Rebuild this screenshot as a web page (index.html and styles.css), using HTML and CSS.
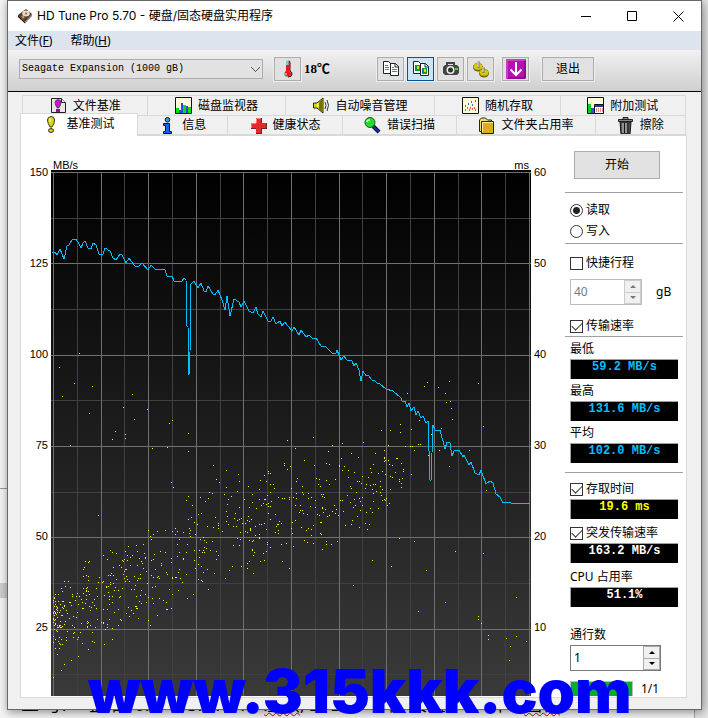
FILE: index.html
```html
<!DOCTYPE html>
<html lang="zh-CN">
<head>
<meta charset="utf-8">
<title>HD Tune Pro 5.70</title>
<link rel="stylesheet" href="styles.css">
</head>
<body>
<main class="window">
  <header class="titlebar">
    <svg class="app-icon" viewBox="0 0 16 16"><path d="M1 7 9 1l6 5-7 8z" fill="#493a30"/><path d="m1 7 7 7v1.500L1 9z" fill="#17120f"/><path d="m8 14 7-8v2l-7 7.500z" fill="#8a7460"/><ellipse cx="9" cy="5.500" rx="3.800" ry="3" fill="#e6d9cb"/><circle cx="9" cy="5.500" r="1" fill="#856750"/><path d="m4 8 2-1 2 3-2 1z" fill="#d98d35"/></svg>
    <h1>HD Tune Pro 5.70 - 硬盘/固态硬盘实用程序</h1>
    <div class="caption">
      <button aria-label="最小化"><svg viewBox="0 0 11 11"><path d="M0 5.500h10"/></svg></button>
      <button aria-label="最大化"><svg viewBox="0 0 11 11"><path d="M.5.5h9v9h-9z"/></svg></button>
      <button aria-label="关闭"><svg viewBox="0 0 11 11"><path d="m.5.5 10 10m0-10-10 10"/></svg></button>
    </div>
  </header>
  <nav class="menubar"><a href="#">文件(<u>F</u>)</a><a href="#">帮助(<u>H</u>)</a></nav>
  <section class="toolbar">
    <select class="drive" aria-label="硬盘"><option>Seagate Expansion (1000 gB)</option></select>
    <button class="tool" aria-label="温度"><svg viewBox="0 0 18 18"><path d="M7 11V2.500q0-2 2-2t2 2V11q2 1 2 3.300Q13 17 9.500 17 5 17 5 14q0-2 2-3" fill="#8e8e8e"/><path d="M7 2.500Q7 1 9 1v11H7z" fill="#4ce0ee"/><path d="M7 5h3v6q2 1 2 3 0 2-3 2t-3-2q0-2 1-3z" fill="#f01818"/><path d="M10 1q1 0 1 2v8q2 1 2 3 0 3-4 3" fill="none" stroke="#400" stroke-width="1"/><path d="M7 13v2" stroke="#fff"/></svg></button>
    <output class="temp">18℃</output>
    <button class="tool" aria-label="复制文本"><svg viewBox="0 0 18 18"><g fill="#fff" stroke="#222"><path d="M1.500 1.500h5l3 3v9h-8z"/><path d="M8.500 3.500h5l3 3v9h-8z"/><path d="M13 3.500v3.500h3.500" fill="none"/></g><path d="M3 5.500h3M3 7.500h4M3 9.500h4M10 7.500h2M10 9.500h5M10 11.500h5" stroke="#188cf0"/></svg></button>
    <button class="tool selected" aria-label="复制图像"><svg viewBox="0 0 18 18"><g fill="#fff" stroke="#222"><path d="M1.500 1.500h5l3 3v9h-8z"/><path d="M8.500 3.500h5l3 3v9h-8z"/><path d="M13 3.500v3.500h3.500" fill="none"/></g><path d="M3 5h5v6H3zM10 8h5v6h-5z" fill="#00a02c"/><path d="M5 6h2v3H5zM12 9h2v3h-2z" fill="#f3d21c"/><path d="M3 7h1v3H3zM10 10h1v3h-1z" fill="#2855e8"/></svg></button>
    <button class="tool" aria-label="截图"><svg viewBox="0 0 18 18"><path d="M5 5V3h7v2" fill="none" stroke="#444" stroke-width="2"/><path d="M3 5h12l2 2v6l-2 2H3l-2-2V7z" fill="#444"/><circle cx="8.500" cy="10" r="4" fill="#eee"/><circle cx="8.500" cy="10" r="2.500" fill="#333"/><path d="M13 8h3v2h-3z" fill="#20e030"/></svg></button>
    <button class="tool" aria-label="选项"><svg viewBox="0 0 18 18"><ellipse cx="6" cy="7.500" rx="5" ry="4" fill="#6b6200"/><ellipse cx="12" cy="13.500" rx="5" ry="4" fill="#6b6200"/><g fill="#d8c800" stroke="#9a8d00"><ellipse cx="6" cy="6.500" rx="4.500" ry="3.500" stroke-dasharray="2 1"/><ellipse cx="12" cy="12.500" rx="4.500" ry="3.500" stroke-dasharray="2 1"/></g><path d="M6.500 1v7M11.500 7v6" stroke="#777" stroke-width="2"/><path d="M6 1v6M11 7v5" stroke="#eee"/></svg></button>
    <button class="tool save" aria-label="保存"><svg viewBox="0 0 20 20"><rect x="0" y="0" width="20" height="20" rx="1" fill="#b410b4"/><path d="M1 19V1h18" stroke="#dc6adc" fill="none"/><path d="M19 2v17H2" stroke="#730073" fill="none"/><path d="M10 3v12M4.500 10.500l5.500 5.500 5.500-5.500" fill="none" stroke="#fff" stroke-width="2"/></svg></button>
    <button class="exit">退出</button>
  </section>
  <section class="content">
    <div class="tabs">
      <button class="tab"><svg viewBox="0 0 17 17"><path d="M1.500 1.500h10l4 4v10h-14z" fill="#e8e8e8" stroke="#222"/><path d="M11.500 1.500v4h4" fill="#fff" stroke="#222"/><path d="M8 2.500q3 0 3 3T8.800 11H7.200Q5 8 5 5.500t3-3" fill="#c814d0" stroke="#222" stroke-width=".6"/><path d="M6 12h4v3H6z" fill="#a000b0"/></svg>文件基准</button>
      <button class="tab"><svg viewBox="0 0 17 17"><path d="M.5.5h16v16H.5z" fill="#fffde0" stroke="#111"/><path d="M1 11h3v5H1zM8 8h3v8H8zM13 10h3v6h-3z" fill="#00e000"/><path d="M4 13h2v3H4zM6 6h2v10H6zM11 9h2v7h-2z" fill="#3048d8"/></svg>磁盘监视器</button>
      <button class="tab"><svg viewBox="0 0 17 17"><path d="M.5 6v5H4l6 5V1L4 6z" fill="#d8d800" stroke="#222"/><path d="M6 6v6l3 3V2z" fill="#777000"/><path d="M5 6v4" stroke="#fff"/><path d="M12 5q2 3 0 7M14 3q3 5 0 11" fill="none" stroke="#333"/></svg>自动噪音管理</button>
      <button class="tab"><svg viewBox="0 0 17 17"><path d="M.5.5h16v16H.5z" fill="#fffbd8" stroke="#111"/><path d="M3 13h1M5 11h1M7 13h1M8 11h1M10 12h1M12 11h1M13 13h1" stroke="#e82020" stroke-width="1.500"/><path d="M3 9h1M6 7h1M9 5h1M10 8h1M13 4h1" stroke="#2030e0" stroke-width="1.500"/></svg>随机存取</button>
      <button class="tab"><svg viewBox="0 0 17 17"><path d="M.5.5h16v16H.5z" fill="#fffbd8" stroke="#111"/><path d="M1 7h3v9H1z" fill="#00d020"/><path d="M4 11h3v5H4z" fill="#3050e0"/><path d="M7.500 7.500h9v9h-9z" fill="#fff" stroke="#111"/><path d="M8 8h8v2H8z" fill="#283890"/><path d="M9 12h7M9 14h7" stroke="#d02020" stroke-dasharray="1 1"/></svg>附加测试</button>
    </div>
    <div class="tabs front">
      <button class="tab active"><svg viewBox="0 0 17 17"><path d="M8 .5q3.500 0 3.500 3.500T9 11H7Q4.500 7 4.500 4T8 .5" fill="#d8d800" stroke="#333"/><path d="M7 2v4" stroke="#fff"/><ellipse cx="8" cy="14.500" rx="2.500" ry="2" fill="#d0d000" stroke="#333"/></svg>基准测试</button>
      <button class="tab"><svg viewBox="0 0 17 17"><circle cx="8.500" cy="2.800" r="2.300" fill="#18a8f0" stroke="#111"/><path d="M4.500 6.500h6v8h2v2h-8v-2h2v-6h-2z" fill="#1464f0" stroke="#111"/></svg>信息</button>
      <button class="tab"><svg viewBox="0 0 17 17"><path d="M6 1h6v5h5v6h-5v5H6v-5H1V6h5z" fill="#7d1d20"/><path d="M6 1h5v5h5v5h-5v5H6v-5H1V6h5z" fill="#e42a2e"/><path d="M6.500 6V1.500H11M1.500 11V6.500H6" fill="none" stroke="#f47b76"/></svg>健康状态</button>
      <button class="tab"><svg viewBox="0 0 17 17"><path d="m9 9 6 6" stroke="#111" stroke-width="4"/><path d="m9 9 6 6" stroke="#1624d0" stroke-width="2"/><circle cx="6" cy="5.500" r="5" fill="#24dc28" stroke="#116018"/><path d="M3 5q0-2 3-2" fill="none" stroke="#d6ffd6" stroke-width="1.500"/></svg>错误扫描</button>
      <button class="tab"><svg viewBox="0 0 17 17"><path d="M1.500 14.500V3l2-2h4l2 2h4v12z" fill="#f1e36a" stroke="#222"/><path d="M3.500 4.500h12v12h-12z" fill="#d8af18" stroke="#222"/><path d="M4.500 15V5.500H15" fill="none" stroke="#fff39a"/></svg>文件夹占用率</button>
      <button class="tab"><svg viewBox="0 0 17 17"><path d="M3 5h11l-1 12H4z" fill="#555" stroke="#111"/><path d="M6 6v10M9 6v10" stroke="#d0d0d0"/><path d="M7.500 6v10M11 6v10" stroke="#181818"/><path d="M1.500 2.500h14v2h-14zM6 2V.5h5V2" fill="#888" stroke="#222"/></svg>擦除</button>
    </div>
    <div class="panel">
      <div class="axis left"><span>150</span><span>125</span><span>100</span><span>75</span><span>50</span><span>25</span></div>
      <figure class="chart">
        <figcaption><span>MB/s</span><span>ms</span></figcaption>
        <svg id="plot" viewBox="51 170 480 526" preserveAspectRatio="none" shape-rendering="crispEdges">
          <defs><linearGradient id="shade" x1="0" y1="0" x2="0" y2="1"><stop offset="0" stop-color="#000"/><stop offset="1" stop-color="#3a3a3a"/></linearGradient></defs>
          <rect x="51" y="170" width="480" height="526" fill="url(#shade)"/>
          <path id="minor" class="minor"/>
          <path id="major" class="major"/>
          <path id="access" fill="#ff0"/>
          <polyline class="transfer" points="52,252 55,252 57,255 60,249 64,259 67,246 69,245 72,240 76,239 79,244 81,248 83,243 85,241 88,248 91,249 93,243 96,245 99,254 103,254 105,248 110,251 113,258 116,260 120,254 122,255 126,263 129,258 135,266 139,266 142,263 148,270 151,265 156,270 160,269 165,270 167,276 172,276 174,281 182,281 184,278 186,280 187,326 188,327 189,375 190,352 191,284 194,281 198,288 201,283 204,291 206,292 208,286 213,294 215,295 218,290 222,300 225,310 227,296 230,316 234,299 239,302 241,307 244,301 249,311 253,313 256,307 258,314 261,317 263,311 268,321 271,321 273,317 276,324 280,321 282,326 285,322 288,326 292,331 294,327 299,335 301,330 306,337 309,335 313,339 316,338 321,346 325,346 332,353 336,353 337,350 341,360 344,356 347,360 352,361 354,366 356,363 359,370 361,381 363,371 366,376 368,375 372,380 374,380 377,383 380,384 386,389 393,391 401,398 402,401 405,401 407,407 409,403 411,411 414,407 416,415 418,411 421,418 423,416 426,423 428,421 430,480 431,481 433,425 435,430 438,431 440,430 445,449 447,442 450,443 452,456 454,451 459,450 463,457 464,455 469,465 471,462 475,473 479,475 481,470 486,484 490,481 493,483 496,494 500,497 503,503 508,502 511,503 530,503"/>
        </svg>
      </figure>
      <div class="axis right"><span>60</span><span>50</span><span>40</span><span>30</span><span>20</span><span>10</span></div>
      <form class="side">
        <button type="button" class="start">开始</button>
        <div class="group modes">
          <label class="check"><input type="radio" name="mode" checked>读取</label>
          <label class="check"><input type="radio" name="mode">写入</label>
        </div>
        <div class="group options">
          <label class="check"><input type="checkbox">快捷行程</label>
          <div class="row"><span class="spin disabled"><input type="text" value="40" disabled aria-label="行程容量"><span class="arrows"><button type="button" disabled aria-label="增加"></button><button type="button" disabled aria-label="减少"></button></span></span><span>gB</span></div>
          <label class="check"><input type="checkbox" checked>传输速率</label>
        </div>
        <div class="group rates">
          <div class="stat"><label for="min">最低</label><output id="min">59.2 MB/s</output></div>
          <div class="stat"><label for="max">最高</label><output id="max">131.6 MB/s</output></div>
          <div class="stat"><label for="avg">平均</label><output id="avg">102.0 MB/s</output></div>
        </div>
        <div class="group others">
          <div class="stat"><label class="check"><input type="checkbox" checked>存取时间</label><output class="yellow">19.6 ms</output></div>
          <div class="stat"><label class="check"><input type="checkbox" checked>突发传输速率</label><output class="white">163.2 MB/s</output></div>
          <div class="stat"><label for="cpu">CPU 占用率</label><output id="cpu" class="white">51.1%</output></div>
        </div>
        <div class="passes">
          <label for="pass">通行数</label>
          <span class="spin wide"><input id="pass" type="text" value="1"><span class="arrows"><button type="button" aria-label="增加"></button><button type="button" aria-label="减少"></button></span></span>
          <div class="progress"><span class="bar"></span><span>1/1</span></div>
        </div>
      </form>
    </div>
  </section>
</main>
<p class="document-line">二 号: 一盘 的 0.0 一 3.2T 6TB <u>左频</u>, 2TB 了 个福 安盘 一个讲 0 <u>图标</u></p>
<div class="watermark">www.315kkk.com</div>
<script src="chart.js"></script>
</body>
</html>
```
FILE: styles.css
```css
* { box-sizing: border-box; }
body {
  position: relative;
  margin: 0;
  padding: 0 6px 0 7px;
  min-height: 100vh;
  overflow: hidden;
  font: 12px/16px "Noto Sans", "Noto Sans CJK SC", sans-serif;
  color: #000;
  background:
    linear-gradient(#999, #999) 0 488px / 8px 1px no-repeat,
    linear-gradient(#ccc, #ccc) 0 583px / 8px 15px no-repeat,
    linear-gradient(90deg, #f4f4f4 0 694px, #aaa 694px 695px, #e4e4e4 695px);
}
button, input, select, output { font: inherit; color: inherit; }
button { padding: 0; cursor: default; }
.window {
  position: relative;
  z-index: 1;
  border: 1px solid #686868;
  background: #f0f0f0;
  box-shadow: 1px 2px 9px rgba(0, 0, 0, .45);
}
.titlebar { display: flex; align-items: center; height: 30px; padding-left: 9px; background: #fff; }
.app-icon { width: 16px; height: 16px; }
h1 { margin: 0 auto 0 4px; font: 400 12px/16px Inter, "Noto Sans CJK SC", sans-serif; }
.caption { display: flex; }
.caption button { display: grid; place-items: center; width: 46px; height: 30px; border: 0; background: none; }
.caption svg { width: 11px; height: 11px; fill: none; stroke: #000; }
.menubar { display: flex; gap: 18px; align-items: center; height: 19px; padding-left: 7px; background: #dde4ed; }
.menubar a { color: #000; text-decoration: none; }
.toolbar {
  display: flex;
  align-items: center;
  height: 42px;
  padding: 0 11px 3px;
  border-bottom: 1px solid #000;
  background: linear-gradient(#f1f1f1, #cfcfcf);
}
.drive {
  appearance: none;
  width: 244px;
  height: 20px;
  padding: 0 2px;
  border: 1px solid #adadad;
  border-radius: 0;
  font: 10px/18px "Liberation Mono", monospace;
  background:
    linear-gradient(45deg, transparent 46%, #555 46% 58%, transparent 58%) 231px 7px / 5px 5px no-repeat,
    linear-gradient(-45deg, transparent 46%, #555 46% 58%, transparent 58%) 235px 7px / 5px 5px no-repeat,
    #e2e2e2;
}
.tool, .exit { border: 1px solid #adadad; background: #e1e1e1; box-shadow: 0 0 0 1px #eee; }
.tool { display: grid; place-items: center; width: 27px; height: 24px; margin-right: 3px; }
.tool svg { width: 18px; height: 18px; }
.tool.selected { border-color: #005499; background: #cce4f7; }
.drive + .tool { margin-left: 11px; }
.tool.save { margin: 0 13px 0 5px; }
.tool.save svg { width: 20px; height: 20px; }
.temp { width: 73px; font: bold 13px/16px "Liberation Serif", "Noto Sans CJK SC", serif; }
.exit { width: 52px; height: 24px; }
.content { padding: 3px 14px 11px 12px; }
.tabs { display: flex; height: 20px; margin: 0 1px 0 2px; }
.tab {
  display: flex;
  flex: auto;
  align-items: center;
  justify-content: center;
  gap: 6px;
  height: 21px;
  border: 1px solid #d9d9d9;
  border-left-width: 0;
  background: #f0f0f0;
}
.tab:first-child { border-left-width: 1px; }
.tab svg { width: 17px; height: 17px; }
.tabs.front { margin-left: 0; align-items: flex-end; }
.front .tab { height: 20px; }
.front .tab.active {
  position: relative;
  z-index: 1;
  flex: 0 0 118px;
  height: 23px;
  margin-bottom: -1px;
  padding-bottom: 2px;
  border-bottom: 0;
  background: #fff;
}
.panel {
  display: grid;
  grid-template-columns: 30px minmax(0, 1fr) 34px 118px;
  padding: 0 3px 1px 0;
  border: 1px solid #d9d9d9;
  background: #fff;
}
.axis { display: grid; grid-auto-rows: 91px; height: 526px; padding-top: 28px; font: 11px/16px "Liberation Sans", sans-serif; }
.axis.left { padding-right: 3px; text-align: right; }
.axis.right { padding-left: 3px; }
.chart { margin: 0; }
.chart figcaption { display: flex; justify-content: space-between; align-items: flex-end; height: 34px; padding: 0 2px; font: 11px/10px "Liberation Sans", sans-serif; }
.chart svg { display: block; width: 100%; height: 526px; }
.minor, .major, .transfer { fill: none; }
.minor { stroke: #404040; }
.major { stroke: #707070; }
.transfer { stroke: #00bfff; }
.side { padding-top: 15px; }
.start { display: block; width: 86px; height: 28px; margin: 0 9px 13px; border: 1px solid #adadad; background: #e1e1e1; }
.group { padding-left: 5px; border-top: 1px solid #a0a0a0; }
.check { display: flex; align-items: center; gap: 3px; height: 20px; }
.check input { appearance: none; width: 13px; height: 13px; margin: 0; border: 1px solid #333; background: #fff; }
.check input[type="radio"] { border-radius: 50%; }
.check input[type="radio"]:checked { background: radial-gradient(circle, #222 3px, #fff 4px); }
.check input[type="checkbox"]:checked::after { content: ""; display: block; width: 9px; height: 5px; margin: 1px; border: solid #333; border-width: 0 0 1px 1px; transform: rotate(-45deg); }
.modes { padding-top: 7px; padding-bottom: 2px; }
.modes .check + .check { margin-top: 1px; }
.options { padding-top: 9px; }
.row { display: flex; align-items: center; gap: 14px; margin: 6px 0 11px; }
.spin { display: flex; width: 72px; height: 26px; border: 1px solid #7a7a7a; }
.spin input { min-width: 0; flex: 1; height: 22px; padding: 0 3px; border: 0; background: #fff; }
.spin.disabled { border-color: #bbb; color: #777; }
.arrows { display: grid; width: 17px; gap: 1px; background: #aaa; padding: 1px; }
.arrows button { display: grid; place-items: center; border: 0; background: #f0f0f0; }
.arrows button::after { content: ""; border: 3px solid transparent; border-top-width: 0; border-bottom-color: #000; }
.arrows button + button::after { border-width: 3px 3px 0; border-color: #000 transparent transparent; }
.disabled .arrows { background: #ccc; }
.disabled .arrows button::after { opacity: .5; }
.spin.wide { width: 91px; }
.rates { display: grid; gap: 2px; padding-top: 2px; padding-bottom: 9px; }
.others { display: grid; gap: 4px; padding-top: 6px; }
.stat label { height: 20px; line-height: 20px; }
.stat label:not(.check) { display: block; }
.stat output {
  display: block;
  width: 108px;
  height: 20px;
  border: solid #a0a0a0;
  border-width: 1px 0 0 1px;
  background: #000;
  color: #00bfff;
  text-align: center;
  font: bold 12px/14px "Liberation Mono", monospace;
}
.stat .yellow { color: #ff0; }
.stat .white { color: #fff; }
.passes { padding: 18px 0 0 5px; }
.passes label { display: block; height: 20px; line-height: 20px; }
.progress { display: flex; gap: 8px; height: 15px; margin-top: 10px; }
.bar { width: 63px; border: 1px solid #bcbcbc; border-bottom: 0; background: #06b025; }
.document-line { height: 24px; margin: -16px 0 0; padding-left: 14px; white-space: nowrap; font-size: 18px; line-height: 20px; }
.document-line u { text-decoration: underline wavy #c00 1px; }
.watermark { position: absolute; left: 88px; bottom: -3px; z-index: 2; font: 900 60px/60px Inter, sans-serif; color: #00f; white-space: nowrap; }
```
FILE: chart.js
```js
const byId = id => document.getElementById(id);

// Grid: every second line is a labelled (major) one.
let major = '', minor = '';
for (let i = 0; i <= 20; i++) {
  const x = Math.round(53 + i * 23.8) + 0.5;
  const line = `M${x} 172V696`;
  if (i % 2) minor += line; else major += line;
}
for (let i = 0; i <= 11; i++) {
  const y = Math.round(172 + i * 45.65) + 0.5;
  const line = `M51 ${y}H531`;
  if (i % 2) minor += line; else major += line;
}
byId('major').setAttribute('d', major);
byId('minor').setAttribute('d', minor);

// Access time samples: isolated readings first, then the dense band.
const samples = [
  79,353, 59,367, 74,383, 92,386, 132,394, 62,396, 89,413, 123,407, 147,409, 134,419, 115,431, 112,439,
  125,434, 125,438, 70,445, 169,423, 172,420, 188,433, 188,451, 167,447, 152,448, 171,482, 173,487, 98,515,
  213,465, 219,482, 216,479, 226,470, 427,382, 424,386, 438,387, 449,381, 478,383, 445,393, 450,401, 446,402,
  451,408, 452,419, 483,426, 407,393, 401,399, 419,420, 441,428, 431,434, 469,450, 439,450, 449,466, 428,455,
  400,424, 411,429, 390,430, 381,430, 400,432, 313,437, 287,440, 342,443, 332,445, 295,448, 328,451, 363,442,
  351,453, 358,457, 410,446, 405,446, 412,446, 420,444, 418,444, 414,450, 403,469, 411,474, 389,464, 388,460,
  445,602, 418,611, 478,616, 478,619, 481,623, 488,635, 488,639, 506,638, 516,636, 526,641, 510,646, 509,660,
  486,490, 516,597, 455,551, 483,553, 399,538, 414,541, 391,566, 426,570, 367,529, 372,560, 353,585,
  61,670, 53,677, 64,664, 57,654, 71,660, 78,656, 92,641, 94,642, 104,644, 112,639
];
let seed = 570;
const random = () => (seed = (seed * 16807) % 2147483647) / 2147483647;

// Upper and lower limits of the band as [x, top, bottom].
const band = [[53, 582, 650], [75, 562, 662], [100, 538, 642], [140, 522, 632], [190, 492, 602], [240, 462, 590], [290, 446, 570], [340, 446, 556], [410, 432, 500]];
const limits = x => {
  const i = Math.max(1, band.findIndex(point => point[0] >= x));
  const [a, b] = [band[i - 1], band[i]];
  const t = (x - a[0]) / (b[0] - a[0]);
  return [a[1] + t * (b[1] - a[1]), a[2] + t * (b[2] - a[2])];
};
for (let i = 0; i < 660; i++) {
  const x = Math.round(53 + Math.pow(random(), 1.55) * 350);
  const [top, bottom] = limits(x);
  const spread = random() * 0.65 + random() * 0.35;
  samples.push(x, Math.round(top + (bottom - top) * spread));
}
let dots = '';
for (let i = 0; i < samples.length; i += 2) dots += `M${samples[i]} ${samples[i + 1]}h1v1h-1z`;
byId('access').setAttribute('d', dots);
```
